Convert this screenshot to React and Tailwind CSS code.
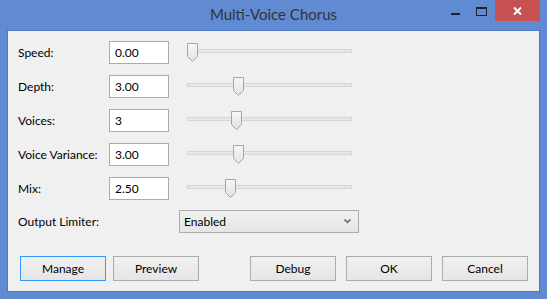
import React from 'react';

const rows = [
  { label: 'Speed:', value: '0.00', thumb: 0 },
  { label: 'Depth:', value: '3.00', thumb: 46 },
  { label: 'Voices:', value: '3', thumb: 44 },
  { label: 'Voice Variance:', value: '3.00', thumb: 46 },
  { label: 'Mix:', value: '2.50', thumb: 38 },
];

function Thumb({ left }) {
  return (
    <svg
      className="absolute top-[2px]"
      style={{ left }}
      width="11"
      height="19"
      viewBox="0 0 11 19"
    >
      <defs>
        <linearGradient id="thumbFill" x1="0" y1="0" x2="0" y2="1">
          <stop offset="0" stopColor="#f7f7f7" />
          <stop offset="1" stopColor="#e1e1e1" />
        </linearGradient>
      </defs>
      <polygon
        points="0.5,0.5 10.5,0.5 10.5,13.5 5.5,18.5 0.5,13.5"
        fill="url(#thumbFill)"
        stroke="#a6a6a6"
      />
    </svg>
  );
}

function Slider({ thumb }) {
  return (
    <div className="relative w-[165px] h-[23px] ml-[18px]">
      <div className="mt-[8px] h-[4px] bg-[#e7e7e7] border border-[#d6d6d6]" />
      <Thumb left={thumb} />
    </div>
  );
}

function Button({ children, focused }) {
  return (
    <button
      className={`w-[86px] h-[25px] flex items-center justify-center text-[12px] text-black bg-gradient-to-b from-[#f0f0f0] to-[#e5e5e5] border ${focused ? 'border-[#3399ff]' : 'border-[#acacac]'}`}
    >
      {children}
    </button>
  );
}

export default function App() {
  return (
    <div
      className="w-[547px] h-[299px] bg-[#608ad2] flex flex-col"
      style={{ fontFamily: 'Lato, "Noto Sans", sans-serif' }}
    >
      {/* Title bar */}
      <div className="h-[30px] flex shrink-0">
        <div className="w-[105px]" />
        <div className="flex-1 flex items-center justify-center text-[15px] text-[#333] pb-[1px]">
          Multi-Voice Chorus
        </div>
        <div className="w-[105px] flex items-start">
          <div className="w-[26px] h-[21px] flex items-center justify-center">
            <div className="w-[9px] h-[2px] bg-[#222] mt-[7px]" />
          </div>
          <div className="w-[27px] h-[21px] flex items-center justify-center">
            <div className="w-[11px] h-[9px] border border-t-[2px] border-[#222] mt-[1px]" />
          </div>
          <div className="w-[45px] h-[21px] bg-[#c75050] flex items-center justify-center">
            <svg width="9" height="8" viewBox="0 0 9 8">
              <path d="M1 0.5 L8 7.5 M8 0.5 L1 7.5" stroke="#fff" strokeWidth="2" />
            </svg>
          </div>
        </div>
      </div>

      {/* Client area */}
      <div className="mx-[7px] mb-[7px] flex-1 bg-[#f0f0f0] border border-[#4f78bf] flex flex-col text-[12px] text-black">
        <div className="pt-[10px] pl-[10px] flex flex-col gap-[11px]">
          {rows.map((r) => (
            <div key={r.label} className="flex items-center h-[23px]">
              <div className="w-[91px]">{r.label}</div>
              <div className="w-[60px] h-[23px] bg-white border border-[#ababab] flex items-center pl-[5px]">
                {r.value}
              </div>
              <Slider thumb={r.thumb} />
            </div>
          ))}
        </div>

        <div className="pl-[10px] mt-[10px] flex items-center h-[23px]">
          <div className="w-[161px]">Output Limiter:</div>
          <div className="w-[180px] h-[23px] border border-[#acacac] bg-gradient-to-b from-[#f0f0f0] to-[#e5e5e5] flex items-center justify-between pl-[4px] pr-[7px]">
            <span>Enabled</span>
            <svg width="7" height="5" viewBox="0 0 7 5">
              <path d="M0.5 0.5 L3.5 3.5 L6.5 0.5" stroke="#606060" strokeWidth="1.5" fill="none" />
            </svg>
          </div>
        </div>

        <div className="mt-[23px] pl-[12px] pr-[11px] flex items-center">
          <div className="flex gap-[7px]">
            <Button focused>Manage</Button>
            <Button>Preview</Button>
          </div>
          <div className="flex-1" />
          <div className="flex gap-[10px]">
            <Button>Debug</Button>
            <Button>OK</Button>
            <Button>Cancel</Button>
          </div>
        </div>
      </div>
    </div>
  );
}
